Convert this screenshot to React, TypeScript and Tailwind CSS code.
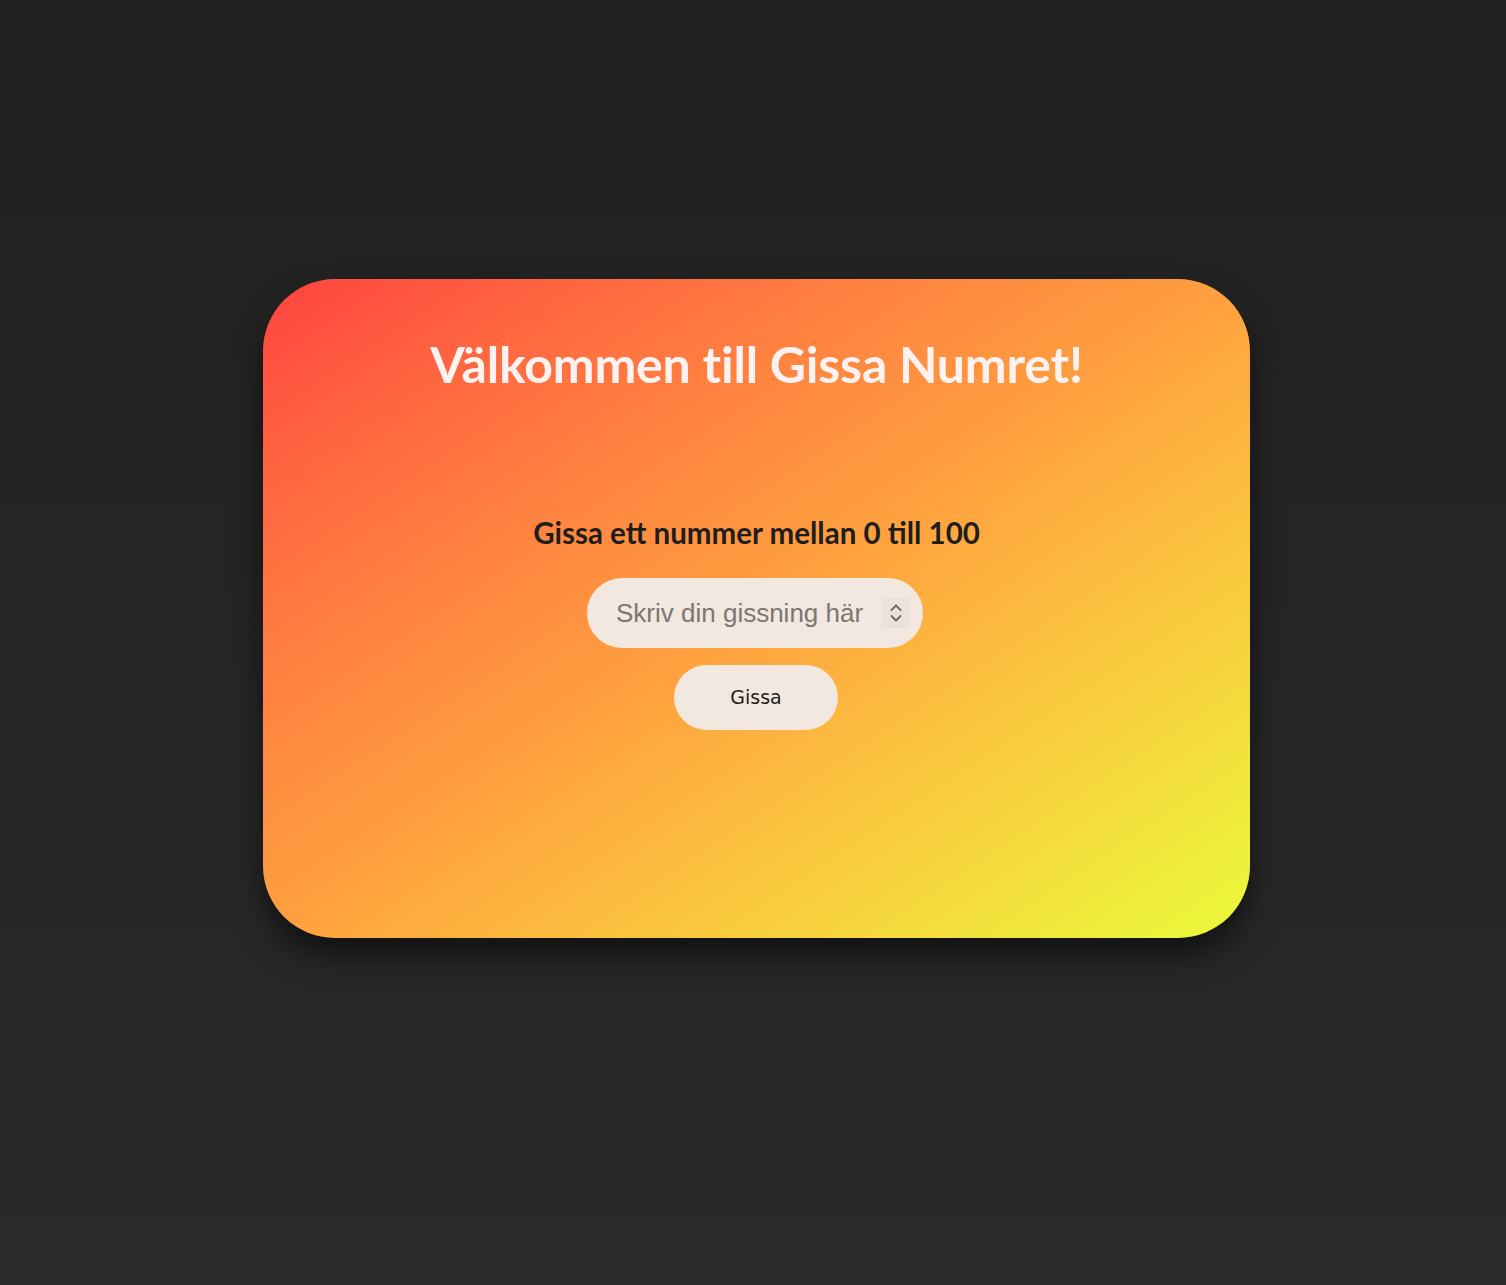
export default function App() {
  return (
    <div className="min-h-screen w-full bg-gradient-to-b from-[#212121] to-[#2a2a2a] flex justify-center pt-[279px] pl-[7px]">
      <div className="w-[987px] h-[659px] rounded-[72px] bg-gradient-to-br from-[#ff4140] via-[#ffa03f] to-[#e9fb3a] shadow-[0_18px_30px_rgba(0,0,0,0.55)] flex flex-col items-center">
        <h1 className="mt-[55px] text-[50px] leading-[60px] font-bold text-[#fff2f0] font-['Lato',sans-serif] tracking-[-0.2px]">
          Välkommen till Gissa Numret!
        </h1>
        <p className="mt-[121px] text-[29.5px] leading-[36px] font-bold text-[#1e1e1e] font-['Lato',sans-serif]">
          Gissa ett nummer mellan 0 till 100
        </p>
        <div className="mt-[27px] mr-[3px] w-[336px] h-[70px] rounded-full bg-[#f2e8df] flex items-center pl-[29px] pr-[13px]">
          <input
            type="number"
            placeholder="Skriv din gissning här"
            className="flex-1 min-w-0 bg-transparent outline-none text-[26px] text-[#333] placeholder:text-[#7d7671] font-['Liberation_Sans',sans-serif] [appearance:textfield] [&::-webkit-inner-spin-button]:appearance-none [&::-webkit-outer-spin-button]:appearance-none"
          />
          <div className="w-[29px] h-[30px] bg-[#ebe2d9] flex items-center justify-center">
            <svg width="14" height="22" viewBox="0 0 14 22" fill="none" stroke="#6d6863" strokeWidth="1.8" strokeLinecap="round" strokeLinejoin="round">
              <path d="M2.5 8 L7 3.5 L11.5 8" />
              <path d="M2.5 14 L7 18.5 L11.5 14" />
            </svg>
          </div>
        </div>
        <button className="mt-[17px] mr-[1px] w-[164px] h-[65px] rounded-full bg-[#f2e8df] text-[19px] text-[#222] font-['DejaVu_Sans',sans-serif]">
          Gissa
        </button>
      </div>
    </div>
  );
}
